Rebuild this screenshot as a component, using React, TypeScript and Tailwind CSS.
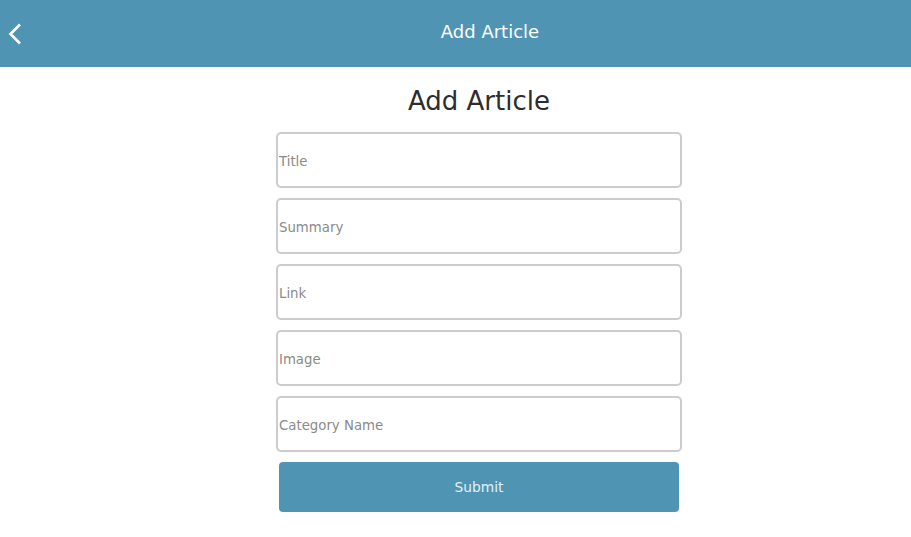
import { useState } from "react";

const fields = ["Title", "Summary", "Link", "Image", "Category Name"];

const font = { fontFamily: "'DejaVu Sans', 'Open Sans', sans-serif" };

export default function App() {
  const [values, setValues] = useState<Record<string, string>>({});

  return (
    <div className="min-h-screen bg-white" style={font}>
      {/* Top bar */}
      <header className="h-[67px] bg-[#5094b4] flex items-center">
        <button className="w-[69px] h-full flex items-center pl-[8px] text-white">
          <svg width="14" height="22" viewBox="0 0 14 22" fill="none">
            <path d="M12 1.5 L2.5 11 L12 20.5" stroke="currentColor" strokeWidth="2.6" />
          </svg>
        </button>
        <h2 className="flex-1 text-center text-white text-[18px] pb-[4px]">Add Article</h2>
      </header>

      <main className="pl-[47px]">
        <div className="w-[406px] mx-auto flex flex-col items-center">
          <h1 className="mt-[17px] mb-[14px] text-[26px] leading-[34px] text-[#2d2d2d]">Add Article</h1>

          <form className="w-full flex flex-col gap-[10px]" onSubmit={(e) => e.preventDefault()}>
            {fields.map((f) => (
              <input
                key={f}
                placeholder={f}
                value={values[f] ?? ""}
                onChange={(e) => setValues({ ...values, [f]: e.target.value })}
                className="h-[56px] w-full border-2 border-[#cccccc] rounded-[5px] px-[1px] pt-[2px] text-[13.3px] text-[#333] placeholder:text-[#8a8a8a] outline-none"
              />
            ))}
            <button
              type="submit"
              className="mx-[3px] h-[50px] rounded-[4px] bg-[#5094b4] text-[#e4f0f5] text-[13.8px]"
            >
              Submit
            </button>
          </form>
        </div>
      </main>
    </div>
  );
}
